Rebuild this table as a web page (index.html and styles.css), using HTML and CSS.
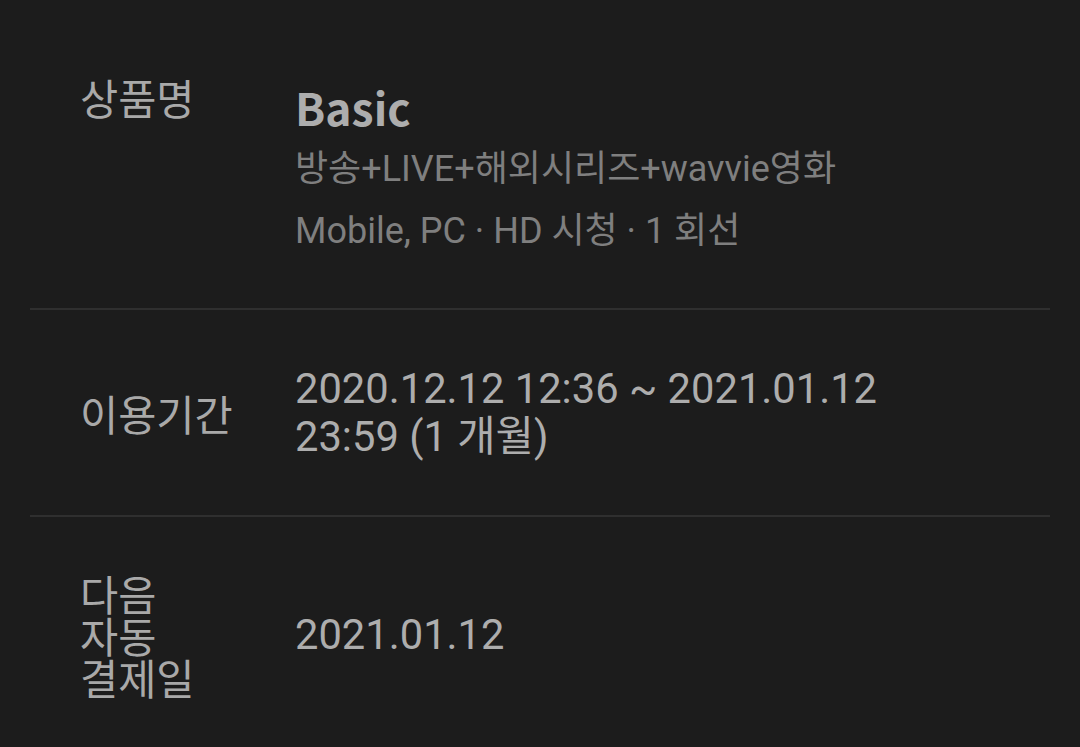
FILE: index.html
```html
<!DOCTYPE html>
<html lang="ko">
<head>
<meta charset="utf-8">
<link rel="stylesheet" href="styles.css">
</head>
<body>
<div class="list">
  <div class="row row-product">
    <div class="label">상품명</div>
    <div class="value">
      <div class="title">Basic</div>
      <div class="sub">방송+LIVE+해외시리즈+wavvie영화</div>
      <div class="sub">Mobile, PC · HD 시청 · 1 회선</div>
    </div>
  </div>
  <div class="row row-period">
    <div class="label">이용기간</div>
    <div class="value text">2020.12.12 12:36 ~ 2021.01.12 23:59 (1 개월)</div>
  </div>
  <div class="row row-next">
    <div class="label">다음 자동 결제일</div>
    <div class="value text">2021.01.12</div>
  </div>
</div>
</body>
</html>
```
FILE: styles.css
```css
html, body {
  margin: 0;
  padding: 0;
  background: #1c1c1c;
}
body {
  width: 1080px;
  height: 747px;
  overflow: hidden;
  font-family: Roboto, "Noto Sans CJK KR", sans-serif;
}
.list {
  margin: 0 30px;
}
.row {
  display: flex;
  align-items: center;
  padding-left: 50px;
  border-top: 2px solid #2f2f2f;
}
.row:first-child {
  border-top: none;
}
.row-product {
  align-items: flex-start;
  padding-top: 76px;
  height: 232px;
}
.row-period {
  height: 205px;
}
.row-next {
  height: 236px;
}
.label {
  width: 155px;
  flex: none;
  font-family: "Noto Sans CJK KR", sans-serif;
  font-size: 41.5px;
  line-height: 42px;
  color: #a9a9a9;
  word-break: keep-all;
}
.value {
  margin-left: 60px;
  flex: 1;
  min-width: 0;
}
.title {
  font-family: "Noto Sans CJK KR", sans-serif;
  font-weight: 700;
  font-size: 44.5px;
  line-height: 62px;
  color: #adadad;
}
.sub {
  font-size: 36px;
  line-height: 62px;
  color: #7f7f7f;
}
.text {
  font-size: 41.7px;
  line-height: 48px;
  color: #adadad;
  max-width: 600px;
}
```
